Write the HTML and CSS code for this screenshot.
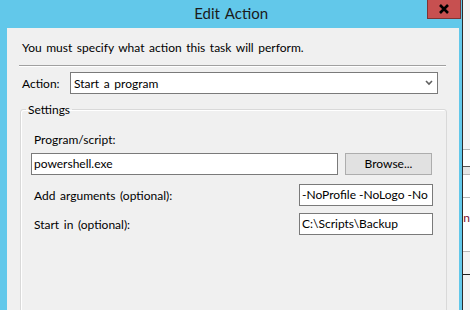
FILE: index.html
```html
<!DOCTYPE html>
<html>

<head>
    <meta charset="utf-8">
    <title>Edit Action</title>
    <link rel="stylesheet" href="styles.css">
</head>

<body>
    <div class="screen">
        <div class="dialog">
            <div class="titlebar">
                <span class="title">Edit Action</span>
                <div class="close">
                    <svg width="12" height="10" viewBox="0 0 12 10">
                        <path d="M2 1 L10 9 M10 1 L2 9" stroke="#000" stroke-width="2.6" fill="none"/>
                    </svg>
                </div>
            </div>

            <div class="client">
                <p class="intro">You must specify what action this task will perform.</p>
                <hr class="sep">

                <div class="action-row">
                    <label class="action-label">Action:</label>
                    <div class="select">
                        <span>Start a program</span>
                        <svg class="chevron" width="8" height="6" viewBox="0 0 8 6">
                            <path d="M1 1 L4 4 L7 1" stroke="#606060" stroke-width="1.6" fill="none"/>
                        </svg>
                    </div>
                </div>

                <fieldset class="settings">
                    <legend>Settings</legend>
                    <label class="field-label">Program/script:</label>
                    <div class="row first">
                        <div class="input wide">powershell.exe</div>
                        <div class="btn">Browse...</div>
                    </div>
                    <div class="row opt args">
                        <label class="field-label">Add arguments (optional):</label>
                        <div class="input short">-NoProfile -NoLogo -No</div>
                    </div>
                    <div class="row opt start">
                        <label class="field-label">Start in (optional):</label>
                        <div class="input short">C:\Scripts\Backup</div>
                    </div>
                </fieldset>
            </div>
        </div>

        <div class="behind">
            <div class="band b1"></div>
            <div class="band b2"></div>
            <div class="band b3"></div>
            <div class="band b4"></div>
            <div class="band b5"><span>n</span></div>
            <div class="band b6"></div>
        </div>
    </div>
</body>

</html>
```

FILE: styles.css
```css
:root {
    --frame: #62c8ea;
    --face: #f0f0f0;
    --field-edge: #7a7a7a;
    --text: #000;
}

html,
body {
    margin: 0;
}

body {
    font-family: Lato, "Liberation Sans", sans-serif;
    font-size: 12px;
    word-spacing: 1.5px;
    color: var(--text);
    background: var(--frame);
}

.screen {
    display: flex;
    width: 470px;
    height: 310px;
    overflow: hidden;
}

.dialog {
    width: 465px;
    display: flex;
    flex-direction: column;
    background: var(--frame);
}

.titlebar {
    position: relative;
    height: 28px;
    flex-shrink: 0;
    display: flex;
    align-items: center;
    justify-content: center;
}

.title {
    font-size: 15px;
    color: #1b1b1b;
    padding-bottom: 3px;
}

.close {
    position: absolute;
    top: 0;
    left: 427px;
    width: 34px;
    height: 19px;
    box-sizing: border-box;
    background: #c75050;
    border: 1px solid #7d3434;
    border-top: none;
    display: flex;
    align-items: center;
    justify-content: center;
}

.client {
    flex: 1;
    margin-left: 7px;
    width: 452px;
    box-sizing: border-box;
    padding-top: 12px;
    background: var(--face);
    overflow: hidden;
}

.intro {
    margin: 0 0 0 15px;
    line-height: 15px;
}

.sep {
    margin: 10px 0 0 12px;
    width: 427px;
    height: 0;
    border: none;
    border-top: 1px solid #a0a0a0;
    border-bottom: 1px solid #fff;
}

.action-row {
    display: flex;
    align-items: center;
    margin-top: 5px;
    padding-left: 15px;
}

.action-label {
    width: 48px;
}

.select {
    width: 368px;
    height: 22px;
    box-sizing: border-box;
    border: 1px solid var(--field-edge);
    background: #fff;
    display: flex;
    align-items: center;
    padding-left: 3px;
}

.chevron {
    margin-left: auto;
    margin-right: 4px;
}

.settings {
    margin: 8px 0 0 13px;
    width: 427px;
    height: 230px;
    box-sizing: border-box;
    border: 1px solid #d9d9d9;
    border-radius: 3px;
    box-shadow: inset 1px 1px 0 #fff;
    padding: 15px 13px 0 10px;
}

.settings legend {
    margin-left: -5px;
    padding: 0 2px;
    line-height: 15px;
}

.field-label {
    display: block;
    padding-left: 3px;
    line-height: 15px;
}

.row {
    display: flex;
    align-items: center;
}

.row.first {
    margin-top: 5px;
}

.row.args {
    margin-top: 9px;
}

.row.start {
    margin-top: 7px;
}

.input {
    height: 22px;
    box-sizing: border-box;
    border: 1px solid var(--field-edge);
    background: #fff;
    padding-left: 2px;
    line-height: 20px;
    word-spacing: normal;
    white-space: nowrap;
    overflow: hidden;
}

.input.wide {
    width: 307px;
}

.input.short {
    width: 134px;
    margin-left: auto;
}

.btn {
    width: 87px;
    height: 22px;
    margin: 1px 0 0 7px;
    box-sizing: border-box;
    border: 1px solid #adadad;
    background: #e1e1e1;
    text-align: center;
    line-height: 20px;
}

/* sliver of the window lying behind the dialog */
.behind {
    flex: 1;
    border-left: 1px solid #2b2b2b;
    background: #f3f3f3;
    display: flex;
    flex-direction: column;
}

.band {
    border-bottom: 1px solid #b9b9b9;
    overflow: hidden;
}

.b1 {
    height: 149px;
}

.b2 {
    height: 16px;
    background: #fff;
    border-bottom-color: #555;
}

.b3 {
    height: 7px;
    background: #e6e6e6;
}

.b4 {
    height: 22px;
    background: #fff;
}

.b5 {
    height: 53px;
    background: #fff;
    color: #7a1030;
    line-height: 40px;
}

.b6 {
    height: 22px;
    border-bottom-color: #222;
}
```
